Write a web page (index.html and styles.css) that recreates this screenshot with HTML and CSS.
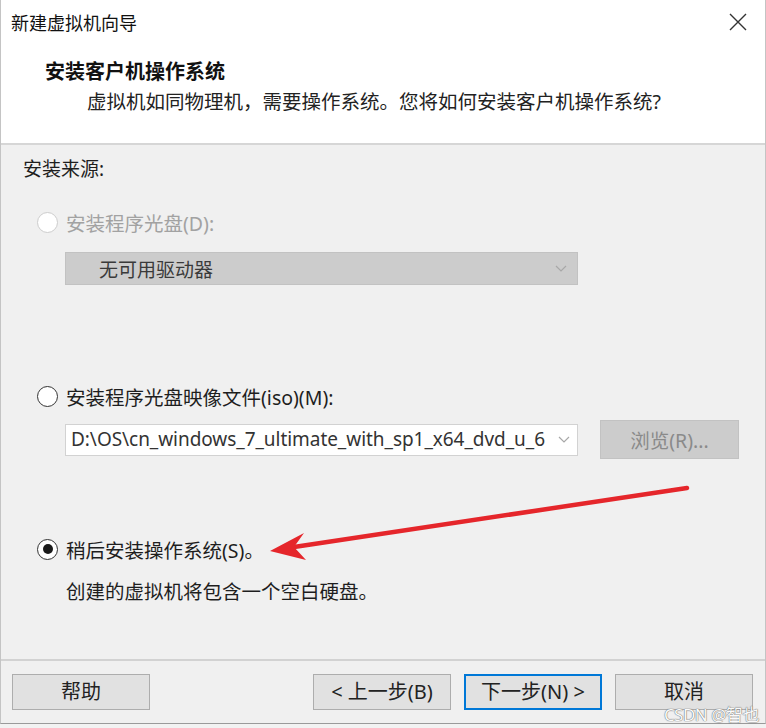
FILE: index.html
```html
<!DOCTYPE html>
<html lang="zh-CN">
<head>
<meta charset="utf-8">
<title>新建虚拟机向导</title>
<link rel="stylesheet" href="styles.css">
</head>
<body>
<div class="window">
  <div class="header">
    <div class="titlebar">
      <span class="title">新建虚拟机向导</span>
      <svg class="close" width="20" height="20" viewBox="0 0 20 20"><path d="M2 2 L18 18 M18 2 L2 18" stroke="#333" stroke-width="1.4" fill="none"/></svg>
    </div>
    <div class="heading">安装客户机操作系统</div>
    <div class="subheading">虚拟机如同物理机，需要操作系统。您将如何安装客户机操作系统?</div>
  </div>

  <div class="main">
    <div class="section-label">安装来源:</div>

    <div class="radio-row row1 disabled">
      <span class="radio"></span>
      <span class="label">安装程序光盘(D):</span>
    </div>
    <div class="select disabled-select">
      <span class="select-text">无可用驱动器</span>
      <svg class="chev" width="12" height="8" viewBox="0 0 12 8"><path d="M1 1 L6 6 L11 1" stroke="#a8a8a8" stroke-width="1.2" fill="none"/></svg>
    </div>

    <div class="radio-row row2">
      <span class="radio"></span>
      <span class="label">安装程序光盘映像文件(iso)(M):</span>
    </div>
    <div class="iso-row">
      <div class="select combo">
        <span class="combo-text">D:\OS\cn_windows_7_ultimate_with_sp1_x64_dvd_u_6</span>
        <span class="chev-box"><svg class="chev" width="12" height="8" viewBox="0 0 12 8"><path d="M1 1 L6 6 L11 1" stroke="#a8a8a8" stroke-width="1.2" fill="none"/></svg></span>
      </div>
      <div class="browse">浏览(R)...</div>
    </div>

    <div class="radio-row row3">
      <span class="radio checked"></span>
      <span class="label">稍后安装操作系统(S)。</span>
    </div>
    <div class="desc">创建的虚拟机将包含一个空白硬盘。</div>
  </div>

  <div class="footer">
    <div class="btn">帮助</div>
    <div class="btn-group">
      <div class="btn">&lt; 上一步(B)</div>
      <div class="btn primary">下一步(N) &gt;</div>
      <div class="btn">取消</div>
    </div>
  </div>

  <svg class="arrow" width="766" height="728" viewBox="0 0 766 728">
    <line x1="687" y1="488" x2="294" y2="547" stroke="#e5262b" stroke-width="4.5" stroke-linecap="round"/>
    <polygon points="270,551 304,533 294,547 306,560" fill="#e5262b"/>
  </svg>

  <div class="watermark">CSDN @智也</div>
</div>
</body>
</html>
```

FILE: styles.css
```css
* { box-sizing: border-box; }

html, body {
  margin: 0;
  padding: 0;
}

body {
  background: #f2f2f2;
  font-family: "Noto Sans", "Noto Sans CJK SC", sans-serif;
  color: #1e1e1e;
  font-size: 19.5px;
}

.window {
  position: relative;
  width: 766px;
  height: 724px;
  display: flex;
  flex-direction: column;
  background: #f0f0f0;
  border-left: 1px solid #c4c4c4;
  border-right: 1px solid #c4c4c4;
  border-bottom: 1px solid #9a9a9a;
  box-shadow: 0 2px 3px rgba(0,0,0,0.15);
}

.header {
  background: #ffffff;
  height: 145px;
  border-bottom: 2px solid #d6d6d6;
  flex: none;
}

.titlebar {
  height: 44px;
  display: flex;
  align-items: center;
  justify-content: space-between;
  padding: 0 17px 0 10px;
}

.title {
  font-size: 18px;
  color: #111;
}

.close { display: block; }

.heading {
  margin-top: 14px;
  padding-left: 44px;
  font-size: 20px;
  font-weight: bold;
  line-height: 28px;
  color: #111;
}

.subheading {
  margin-top: 2px;
  padding-left: 86px;
  font-size: 19.5px;
  line-height: 28px;
  color: #222;
}

.main {
  flex: 1;
  padding: 10px 0 0 0;
}

.section-label {
  padding-left: 22px;
  line-height: 28px;
  font-size: 19px;
}

.radio-row {
  display: flex;
  align-items: center;
  padding-left: 36px;
  height: 28px;
}

.row1 { margin-top: 25px; }
.row2 { margin-top: 97px; }
.row3 { margin-top: 76px; }

.radio {
  width: 21px;
  height: 21px;
  border-radius: 50%;
  border: 1.5px solid #333;
  background: #fff;
  margin-right: 8px;
  display: flex;
  align-items: center;
  justify-content: center;
  flex: none;
}

.radio.checked::after {
  content: "";
  width: 10px;
  height: 10px;
  border-radius: 50%;
  background: #1a1a1a;
}

.disabled .radio { border-color: #cdcdcd; }
.disabled .label { color: #a2a2a2; }

.label { font-size: 19.5px; }

.select {
  display: flex;
  align-items: center;
  justify-content: space-between;
}

.disabled-select {
  margin: 16px 0 0 64px;
  width: 513px;
  height: 33px;
  background: #cccccc;
  border: 1px solid #c2c2c2;
  padding: 0 10px 0 33px;
}

.select-text {
  color: #3a3a3a;
  font-size: 19px;
}

.chev { display: block; }

.iso-row {
  display: flex;
  align-items: center;
  margin: 10px 0 0 64px;
  height: 39px;
}

.combo {
  width: 513px;
  height: 32px;
  background: #fff;
  border: 1px solid #d2d2d2;
  padding-left: 5px;
  overflow: hidden;
}

.combo-text {
  flex: 1;
  white-space: nowrap;
  font-size: 19px;
  letter-spacing: -0.05px;
  line-height: 1;
  color: #333;
}

.chev-box {
  width: 26px;
  height: 100%;
  display: flex;
  align-items: center;
  justify-content: center;
  background: #fff;
  flex: none;
}

.browse {
  margin-left: 22px;
  width: 139px;
  height: 39px;
  background: #cccccc;
  border: 1px solid #c2c2c2;
  color: #8a8a8a;
  display: flex;
  align-items: center;
  justify-content: center;
  font-size: 19.5px;
}

.desc {
  margin-top: 15px;
  padding-left: 65px;
  line-height: 28px;
  font-size: 19.5px;
}

.footer {
  height: 64px;
  flex: none;
  border-top: 2px solid #d2d2d2;
  display: flex;
  justify-content: space-between;
  padding: 13px 12px 0 11px;
}

.btn-group {
  display: flex;
  gap: 13px;
}

.btn {
  width: 138px;
  height: 36px;
  background: #e1e1e1;
  border: 1px solid #adadad;
  display: flex;
  align-items: center;
  justify-content: center;
  font-size: 20px;
  line-height: 1;
  color: #222;
}

.btn.primary {
  border: 2px solid #0078d7;
}

.arrow {
  position: absolute;
  left: -1px;
  top: 0;
  pointer-events: none;
}

.watermark {
  position: absolute;
  right: 6px;
  bottom: 1px;
  font-size: 17px;
  line-height: 15px;
  color: #fafafa;
  text-shadow: 0 0 1px #666, 0 0 1px #666;
  letter-spacing: -0.5px;
}
```
